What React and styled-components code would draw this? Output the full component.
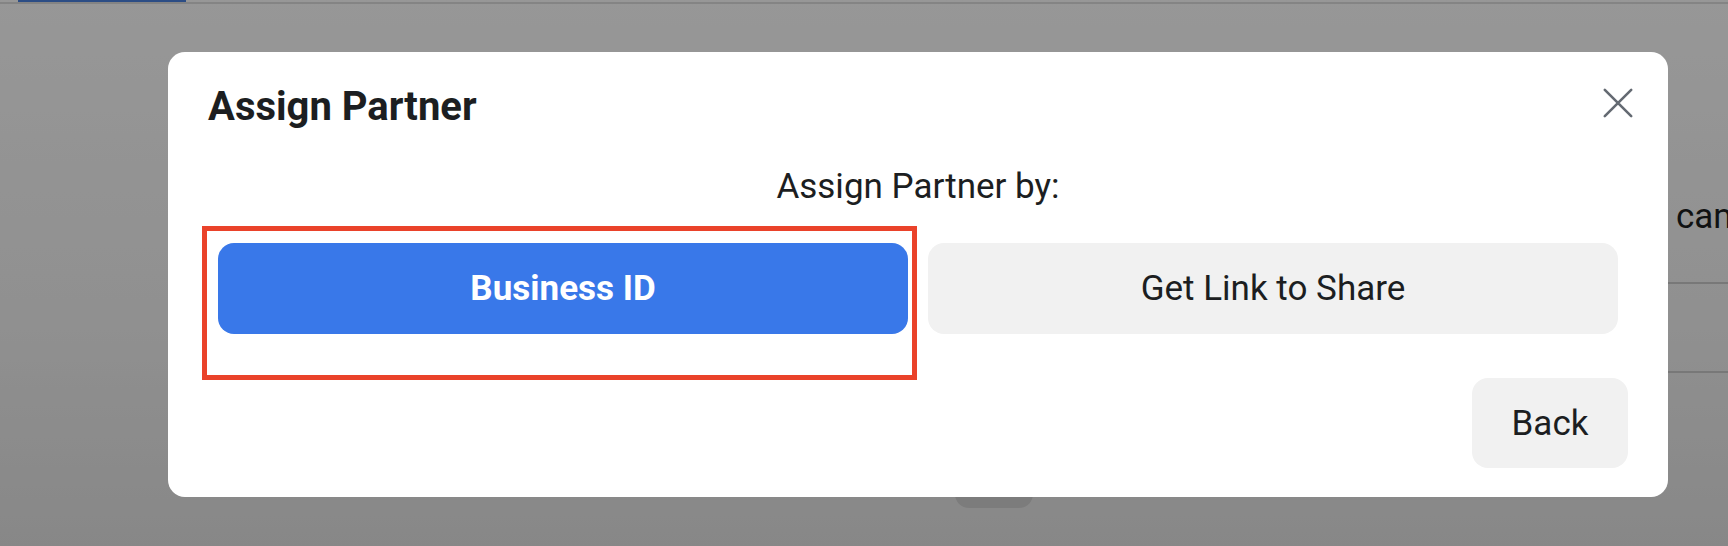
import React from "react";
import styled, { createGlobalStyle } from "styled-components";

const GlobalStyle = createGlobalStyle`
  html, body {
    margin: 0;
    padding: 0;
    width: 1728px;
    height: 546px;
    overflow: hidden;
    font-family: Roboto, "Liberation Sans", Arial, sans-serif;
  }
  * { box-sizing: border-box; }
`;

/* ---------- page behind the dialog ---------- */
const Page = styled.div`
  position: relative;
  width: 1728px;
  height: 546px;
  overflow: hidden;
  background: linear-gradient(180deg, #fcfcfc 0%, #f0f0f0 60%, #e2e2e2 100%);
  display: flex;
  flex-direction: column;
`;

const Nav = styled.div`
  height: 4px;
  border-bottom: 2px solid #dcdcdc;
  display: flex;
`;

const NavIndicator = styled.div`
  margin-left: 18px;
  width: 168px;
  height: 2px;
  background: #4a80de;
`;

const SideColumn = styled.div`
  margin-left: 1200px;
  margin-top: 192px;
  display: flex;
  flex-direction: column;
`;

const SideHeading = styled.div`
  padding-left: 476px;
  margin-bottom: 45px;
  font-size: 35px;
  line-height: 41px;
  color: #1c1e21;
  white-space: nowrap;
`;

const SideRow = styled.div`
  height: 89px;
  border-top: 2px solid #c9c9c9;
`;

const GhostButton = styled.div`
  margin-left: 955px;
  margin-top: 0;
  width: 78px;
  height: 48px;
  border-radius: 14px;
  background: #cfcfcf;
`;

/* ---------- dialog ---------- */
const Overlay = styled.div`
  position: fixed;
  inset: 0;
  background: rgba(0, 0, 0, 0.4);
  display: flex;
  align-items: flex-start;
  justify-content: flex-start;
  padding: 52px 0 0 168px;
`;

const Modal = styled.div`
  width: 1500px;
  background: #ffffff;
  border-radius: 17px;
  padding: 31px 40px 29px;
  display: flex;
  flex-direction: column;
  color: #1c1e21;
`;

const Header = styled.div`
  display: flex;
  align-items: flex-start;
  justify-content: space-between;
`;

const Title = styled.h2`
  margin: 0;
  font-size: 40px;
  line-height: 48px;
  font-weight: 700;
  color: #1c1e21;
`;

const CloseButton = styled.button`
  width: 44px;
  height: 44px;
  margin-top: -2px;
  margin-right: -12px;
  padding: 0;
  border: 0;
  background: transparent;
  display: flex;
  align-items: center;
  justify-content: center;
  cursor: pointer;
`;

const Subtitle = styled.p`
  margin: 35px 0 0;
  text-align: center;
  font-size: 35px;
  line-height: 41px;
  color: #1c1e21;
`;

const ChoiceRow = styled.div`
  position: relative;
  margin-top: 36px;
  padding: 0 10px;
  display: grid;
  grid-template-columns: 1fr 1fr;
  gap: 20px;
`;

const Choice = styled.button`
  height: 91px;
  border: 0;
  border-radius: 16px;
  font-family: inherit;
  font-size: 35px;
  font-weight: ${(p) => (p.$primary ? 700 : 400)};
  color: ${(p) => (p.$primary ? "#ffffff" : "#1c1e21")};
  background: ${(p) => (p.$primary ? "#3978e9" : "#f1f1f1")};
  display: flex;
  align-items: center;
  justify-content: center;
  cursor: pointer;
`;

const Highlight = styled.div`
  position: absolute;
  left: -6px;
  top: -17px;
  width: 715px;
  height: 154px;
  border: 5px solid #ea422a;
  pointer-events: none;
`;

const Footer = styled.div`
  margin-top: 44px;
  display: flex;
  justify-content: flex-end;
`;

const BackButton = styled.button`
  width: 156px;
  height: 90px;
  border: 0;
  border-radius: 16px;
  background: #f1f1f1;
  font-family: inherit;
  font-size: 35px;
  color: #1c1e21;
  cursor: pointer;
`;

const CloseIcon = () => (
  <svg width="44" height="44" viewBox="0 0 44 44" aria-hidden="true">
    <path
      d="M8.8 8.8 L35.2 35.2 M35.2 8.8 L8.8 35.2"
      stroke="#646a72"
      strokeWidth="2.6"
      strokeLinecap="round"
      fill="none"
    />
  </svg>
);

export default function App() {
  return (
    <>
      <GlobalStyle />
      <Page>
        <Nav>
          <NavIndicator />
        </Nav>
        <SideColumn>
          <SideHeading>campaigns</SideHeading>
          <SideRow />
          <SideRow />
        </SideColumn>
        <GhostButton />
        <Overlay>
          <Modal role="dialog" aria-label="Assign Partner">
            <Header>
              <Title>Assign Partner</Title>
              <CloseButton aria-label="Close">
                <CloseIcon />
              </CloseButton>
            </Header>
            <Subtitle>Assign Partner by:</Subtitle>
            <ChoiceRow>
              <Choice $primary>Business ID</Choice>
              <Choice>Get Link to Share</Choice>
              <Highlight />
            </ChoiceRow>
            <Footer>
              <BackButton>Back</BackButton>
            </Footer>
          </Modal>
        </Overlay>
      </Page>
    </>
  );
}
